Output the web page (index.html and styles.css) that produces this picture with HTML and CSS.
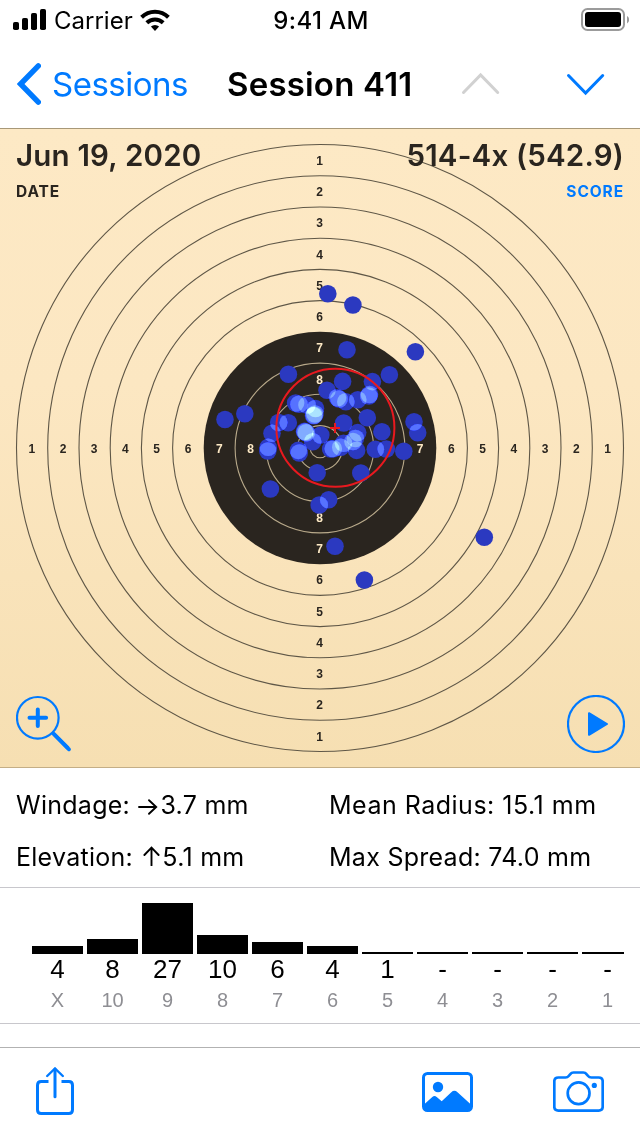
FILE: index.html
```html
<!DOCTYPE html>
<html lang="en">
<head>
    <title>Session 411</title>
    <meta name="viewport" content="width=device-width, initial-scale=1">
    <meta charset="UTF-8">
    <link rel="stylesheet" href="styles.css">
</head>
<body>
    <div class="statusbar">
        <div class="carrier">
            <svg width="34" height="22" viewBox="0 0 34 22">
                <rect x="0" y="13" width="6" height="8" rx="1.8"/>
                <rect x="9" y="9" width="6" height="12" rx="1.8"/>
                <rect x="18" y="4" width="6" height="17" rx="1.8"/>
                <rect x="27" y="0" width="6" height="21" rx="1.8"/>
            </svg>
            <span>Carrier</span>
            <svg class="wifi" width="30" height="22" viewBox="0 0 30 22">
                <g fill="none" stroke="#000" stroke-width="4">
                    <path d="M1.6 8.2a19.2 19.2 0 0 1 26.8 0"/>
                    <path d="M6.8 13.7a11.8 11.8 0 0 1 16.4 0"/>
                </g>
                <path d="M15 22l-4.1-4.4a6.2 6.2 0 0 1 8.2 0z"/>
            </svg>
        </div>
        <div class="clock">9:41 AM</div>
        <div class="battery">
            <svg width="48" height="24" viewBox="0 0 48 24">
                <rect x="1" y="1" width="42" height="21" rx="5.5" fill="none" stroke="#9b9b9b" stroke-width="2"/>
                <rect x="4" y="4" width="36" height="15" rx="3"/>
                <path d="M46 8q2.2 1.2 2.2 3.7t-2.2 3.7z" fill="#9b9b9b"/>
            </svg>
        </div>
    </div>

    <div class="navbar">
        <a class="back">
            <svg width="24" height="42" viewBox="0 0 24 42" fill="none" stroke="#007aff" stroke-width="5.4" stroke-linecap="round" stroke-linejoin="miter">
                <path d="M21.3 2.9L3.6 21l17.7 18.1"/>
            </svg>
            <span>Sessions</span>
        </a>
        <h1>Session 411</h1>
        <div class="arrows">
            <svg width="40" height="24" viewBox="0 0 40 24" fill="none" stroke="#d1d1d1" stroke-width="3" stroke-linecap="round">
                <path d="M2.5 20.5L19.6 3l17.1 17.5"/>
            </svg>
            <svg width="40" height="24" viewBox="0 0 40 24" fill="none" stroke="#007aff" stroke-width="3" stroke-linecap="round">
                <path d="M2.5 3.5L19.6 21 36.7 3.5"/>
            </svg>
        </div>
    </div>

    <div class="target">
        <svg class="face" width="640" height="640" viewBox="0 0 640 640">
            <g class="rings">
                <circle cx="320" cy="320" r="303.5"/>
                <circle cx="320" cy="320" r="272.3"/>
                <circle cx="320" cy="320" r="241"/>
                <circle cx="320" cy="320" r="209.8"/>
                <circle cx="320" cy="320" r="178.6"/>
                <circle cx="320" cy="320" r="147.4"/>
            </g>
            <circle class="black" cx="320" cy="320" r="116.3"/>
            <g class="rings inner">
                <circle cx="320" cy="320" r="84.9"/>
                <circle cx="320" cy="320" r="53.7"/>
                <circle cx="320" cy="320" r="22.4"/>
                <circle cx="320" cy="320" r="9.8"/>
            </g>
            <g class="numbers">
                <text x="319.7" y="36.8">1</text>
                <text x="319.7" y="68">2</text>
                <text x="319.7" y="99.2">3</text>
                <text x="319.7" y="130.5">4</text>
                <text x="319.7" y="161.7">5</text>
                <text x="319.7" y="192.9">6</text>
                <text class="light" x="319.7" y="224.1">7</text>
                <text class="light" x="319.7" y="256">8</text>
                <text class="light" x="319.7" y="394">8</text>
                <text class="light" x="319.7" y="425">7</text>
                <text x="319.7" y="456.2">6</text>
                <text x="319.7" y="487.7">5</text>
                <text x="319.7" y="518.9">4</text>
                <text x="319.7" y="550">3</text>
                <text x="319.7" y="581.4">2</text>
                <text x="319.7" y="612.6">1</text>

                <text x="31.8" y="325">1</text>
                <text x="63" y="325">2</text>
                <text x="94.2" y="325">3</text>
                <text x="125.4" y="325">4</text>
                <text x="156.6" y="325">5</text>
                <text x="188" y="325">6</text>
                <text class="light" x="219.3" y="325">7</text>
                <text class="light" x="250.6" y="325">8</text>
                <text class="light" x="389.2" y="325">8</text>
                <text class="light" x="420.2" y="325">7</text>
                <text x="451.4" y="325">6</text>
                <text x="482.6" y="325">5</text>
                <text x="513.8" y="325">4</text>
                <text x="545" y="325">3</text>
                <text x="576.4" y="325">2</text>
                <text x="607.6" y="325">1</text>
            </g>
            <!-- overlapping shots add up to a lighter blue -->
            <g class="shots">
                <circle cx="327.8" cy="165.7" r="8.8"/>
                <circle cx="352.9" cy="177" r="8.8"/>
                <circle cx="415.4" cy="223.8" r="8.8"/>
                <circle cx="347" cy="221.7" r="8.8"/>
                <circle cx="288.4" cy="246.2" r="8.8"/>
                <circle cx="389.4" cy="246.8" r="8.8"/>
                <circle cx="372.4" cy="253.6" r="8.8"/>
                <circle cx="342.6" cy="253.4" r="8.8"/>
                <circle cx="327" cy="262.3" r="8.8"/>
                <circle cx="225" cy="291.5" r="8.8"/>
                <circle cx="244.8" cy="285.7" r="8.8"/>
                <circle cx="295.6" cy="275" r="8.8"/>
                <circle cx="299" cy="276.3" r="8.8"/>
                <circle cx="307" cy="277" r="8.8"/>
                <circle cx="315.5" cy="280.5" r="8.8"/>
                <circle cx="315" cy="286" r="8.8"/>
                <circle cx="313.5" cy="287.8" r="8.8"/>
                <circle cx="314.3" cy="287.2" r="8.8"/>
                <circle cx="337.5" cy="269.8" r="8.8"/>
                <circle cx="339" cy="271" r="8.8"/>
                <circle cx="345.8" cy="273.7" r="8.8"/>
                <circle cx="357.8" cy="271.7" r="8.8"/>
                <circle cx="369.5" cy="266.5" r="8.8"/>
                <circle cx="368.8" cy="268" r="8.8"/>
                <circle cx="278.7" cy="294.5" r="8.8"/>
                <circle cx="288.3" cy="294.8" r="8.8"/>
                <circle cx="272" cy="305.3" r="8.8"/>
                <circle cx="304.5" cy="303.4" r="8.8"/>
                <circle cx="305.3" cy="304" r="8.8"/>
                <circle cx="306.3" cy="304.8" r="8.8"/>
                <circle cx="320.8" cy="307" r="8.8"/>
                <circle cx="312.7" cy="313.7" r="8.8"/>
                <circle cx="367.3" cy="289.7" r="8.8"/>
                <circle cx="343.7" cy="295" r="8.8"/>
                <circle cx="414" cy="293.8" r="8.8"/>
                <circle cx="417.7" cy="304.8" r="8.8"/>
                <circle cx="381.9" cy="303.8" r="8.8"/>
                <circle cx="357.7" cy="304.6" r="8.8"/>
                <circle cx="355.4" cy="310.5" r="8.8"/>
                <circle cx="353" cy="313.5" r="8.8"/>
                <circle cx="343.5" cy="315.3" r="8.8"/>
                <circle cx="340.8" cy="319.2" r="8.8"/>
                <circle cx="330.7" cy="321" r="8.8"/>
                <circle cx="333.3" cy="320.8" r="8.8"/>
                <circle cx="356.6" cy="322.4" r="8.8"/>
                <circle cx="375.3" cy="321.2" r="8.8"/>
                <circle cx="386.3" cy="321" r="8.8"/>
                <circle cx="403.8" cy="323.3" r="8.8"/>
                <circle cx="268.2" cy="319.3" r="8.8"/>
                <circle cx="267.8" cy="323" r="8.8"/>
                <circle cx="298.3" cy="322.4" r="8.8"/>
                <circle cx="299.3" cy="325" r="8.8"/>
                <circle cx="317.2" cy="344.8" r="8.8"/>
                <circle cx="360.8" cy="345" r="8.8"/>
                <circle cx="270.4" cy="361" r="8.8"/>
                <circle cx="319.2" cy="377" r="8.8"/>
                <circle cx="328.7" cy="371.8" r="8.8"/>
                <circle cx="335" cy="418.2" r="8.8"/>
                <circle cx="364.4" cy="452" r="8.8"/>
                <circle cx="484.3" cy="409.3" r="8.8"/>
            </g>
            <g class="group">
                <circle cx="335.4" cy="299.8" r="59"/>
                <path d="M330 300h10M335 295v10"/>
            </g>
        </svg>
        <div class="caption">
            <div>
                <p class="value">Jun 19, 2020</p>
                <p class="label">DATE</p>
            </div>
            <div class="score">
                <p class="value">514-4x (542.9)</p>
                <p class="label">SCORE</p>
            </div>
        </div>
        <div class="controls">
            <svg width="56" height="58" viewBox="0 0 56 58" fill="none" stroke="#007aff" stroke-linecap="round">
                <circle cx="21.8" cy="22.8" r="20.8" stroke-width="2.2"/>
                <path d="M13.5 22.8h16.6M21.8 14.5v16.6" stroke-width="4"/>
                <path d="M36.3 37.500L52 53.200" stroke-width="3.8" stroke-linecap="butt"/>
                <path d="M38 39.200L53 54.300" stroke-width="3.8"/>
            </svg>
            <svg width="58" height="58" viewBox="0 0 58 58">
                <circle cx="29" cy="29" r="28" fill="none" stroke="#007aff" stroke-width="2.2"/>
                <path d="M22 18.2L40 29 22 39.8z" fill="#007aff" stroke="#007aff" stroke-width="2" stroke-linejoin="round"/>
            </svg>
        </div>
    </div>

    <div class="stats">
        <p>Windage: <svg class="arrow" width="20" height="20" viewBox="0 0 20 20"><path d="M1 11h17M11 4.2l7.2 6.8-7.2 6.8"/></svg>3.7 mm</p>
        <p class="radius">Mean Radius: 15.1 mm</p>
        <p>Elevation: <svg class="arrow up" width="17" height="20" viewBox="0 0 17 20"><path d="M8.5 19.5V2M1.4 9l7.1-7.4L15.6 9"/></svg>5.1 mm</p>
        <p>Max Spread: 74.0 mm</p>
    </div>

    <div class="histogram">
        <div class="col"><div class="bar" style="height: 8px"></div><b>4</b><i>X</i></div>
        <div class="col"><div class="bar" style="height: 15px"></div><b>8</b><i>10</i></div>
        <div class="col"><div class="bar" style="height: 51px"></div><b>27</b><i>9</i></div>
        <div class="col"><div class="bar" style="height: 19px"></div><b>10</b><i>8</i></div>
        <div class="col"><div class="bar" style="height: 12px"></div><b>6</b><i>7</i></div>
        <div class="col"><div class="bar" style="height: 8px"></div><b>4</b><i>6</i></div>
        <div class="col"><div class="bar" style="height: 2px"></div><b>1</b><i>5</i></div>
        <div class="col"><div class="bar" style="height: 2px"></div><b>-</b><i>4</i></div>
        <div class="col"><div class="bar" style="height: 2px"></div><b>-</b><i>3</i></div>
        <div class="col"><div class="bar" style="height: 2px"></div><b>-</b><i>2</i></div>
        <div class="col last"><div class="bar" style="height: 2px"></div><b>-</b><i>1</i></div>
    </div>

    <div class="toolbar">
        <svg class="share" width="38" height="48" viewBox="0 0 38 48" fill="none" stroke="#007aff" stroke-width="3" stroke-linecap="round">
            <path d="M12.5 14.5H5.2q-3.700 0-3.700 3.700v24.600q0 3.700 3.700 3.700h27.600q3.700 0 3.700-3.700V18.200q0-3.700-3.700-3.700h-7.300" stroke-linecap="butt"/>
            <path d="M19 29.8V2.2"/>
            <path d="M11.2 9L19 1.5 26.8 9" stroke-width="2.4"/>
        </svg>
        <svg width="51" height="40" viewBox="0 0 51 40">
            <rect x="1.5" y="1.5" width="48" height="37" rx="4" fill="none" stroke="#007aff" stroke-width="3"/>
            <circle cx="16" cy="15" r="5.2" fill="#007aff"/>
            <path d="M2 32.5l8.3-7.4q2.2-2 4.4 0l5 4.2 9.6-9q3.1-2.9 6.2 0L49.5 33v2q0 4-4 4h-40Q2 39 2 35z" fill="#007aff"/>
        </svg>
        <svg class="camera" width="51" height="42" viewBox="0 0 51 42" fill="none" stroke="#007aff" stroke-width="2.7">
            <path d="M5.3 6.5h7.2q2 0 3.2-1.5l1.6-1.9q1.2-1.6 3.2-1.6h9.8q2 0 3.2 1.6l1.6 1.9q1.2 1.5 3.2 1.5h7.4q4 0 4 4v25.1q0 4-4 4H5.3q-4 0-4-4V10.5q0-4 4-4z"/>
            <circle cx="25.6" cy="22.3" r="10.9"/>
            <circle cx="41.3" cy="14.4" r="2.6" fill="#007aff" stroke="none"/>
        </svg>
    </div>
</body>
</html>
```
FILE: styles.css
```css
* {
    box-sizing: border-box;
}
body {
    margin: 0;
    width: 640px;
    height: 1136px;
    background-color: #fff;
    color: #000;
    font-family: Inter, "Liberation Sans", sans-serif;
    overflow: hidden;
}
p, h1 {
    margin: 0;
}
svg {
    display: block;
    flex: none;
}

/* status bar */
.statusbar {
    display: grid;
    grid-template-columns: 1fr auto 1fr;
    align-items: center;
    height: 40px;
    padding: 0 11px 0 13px;
    font-size: 24px;
    line-height: 40px;
}
.carrier {
    display: flex;
    align-items: center;
    gap: 7px;
}
.carrier span {
    padding-top: 2px;
    line-height: 38px;
}
.clock {
    padding-top: 2px;
    font-weight: 500;
    letter-spacing: 0.4px;
    line-height: 38px;
}
.battery {
    display: flex;
    justify-content: flex-end;
}

/* navigation */
.navbar {
    display: flex;
    align-items: center;
    height: 88px;
    padding: 0 34px 0 17px;
    line-height: 88px;
}
.back {
    display: flex;
    align-items: center;
    gap: 11px;
    width: 210px;
    color: #007aff;
    font-size: 33px;
    letter-spacing: -0.5px;
}
h1 {
    width: 234px;
    font-size: 33px;
    font-weight: 600;
    letter-spacing: 0.2px;
    white-space: nowrap;
}
.arrows {
    display: flex;
    gap: 65px;
}

/* target */
.target {
    position: relative;
    height: 640px;
    border-top: 1px solid #a89878;
    border-bottom: 1px solid #c4ae86;
    background: linear-gradient(#fde9c5, #fce7c2 40%, #f6dfb2);
}
.face {
    position: absolute;
    top: -1px;
    left: 0;
}
.rings {
    fill: none;
    stroke: #5f5747;
    stroke-width: 1.1;
}
.rings.inner {
    stroke: #b9aa8b;
}
.black {
    fill: #2a251f;
}
.numbers {
    fill: #2a251f;
    font-family: "Liberation Sans", Arial, sans-serif;
    font-size: 12px;
    font-weight: bold;
    text-anchor: middle;
}
.numbers .light {
    fill: #fde9c5;
}
.shots {
    isolation: isolate;
    fill: #2b39c0;
}
.shots circle {
    mix-blend-mode: plus-lighter;
}
.group {
    fill: none;
    stroke: #e8191f;
    stroke-width: 2;
}
.caption {
    position: absolute;
    top: 6px;
    left: 16px;
    right: 16px;
    display: flex;
    justify-content: space-between;
    color: #2a251f;
}
.value {
    font-size: 29.5px;
    font-weight: 600;
    line-height: 40px;
    letter-spacing: 0.2px;
}
.label {
    margin-top: 7px;
    font-size: 15.5px;
    font-weight: 700;
    line-height: 20px;
    letter-spacing: 0.9px;
}
.score {
    text-align: right;
}
.score .label {
    color: #007aff;
}
.controls {
    position: absolute;
    bottom: 14px;
    left: 16px;
    right: 15px;
    display: flex;
    justify-content: space-between;
}

/* statistics */
.stats {
    display: grid;
    grid-template-columns: 313px 1fr;
    grid-auto-rows: 52px;
    height: 120px;
    padding: 11px 16px;
    border-bottom: 1px solid #c8c7cc;
    font-size: 25px;
    letter-spacing: 0.27px;
    line-height: 52px;
    white-space: nowrap;
}
.radius {
    letter-spacing: 0.5px;
}
.arrow {
    display: inline-block;
    vertical-align: -2px;
    margin: 0 2px 0 1px;
    fill: none;
    stroke: #000;
    stroke-width: 1.9;
    stroke-linecap: round;
}
.arrow.up {
    vertical-align: 0;
    margin-left: 3px;
}

/* shots per ring */
.histogram {
    display: flex;
    gap: 4px;
    height: 136px;
    margin-bottom: 23px;
    padding: 0 16px 0 32px;
    border-bottom: 1px solid #c8c7cc;
    font-family: "Liberation Sans", Arial, sans-serif;
}
.col {
    display: flex;
    flex-direction: column;
    flex: none;
    justify-content: flex-end;
    width: 51px;
    height: 126px;
    text-align: center;
}
.last {
    width: 42px;
}
.last b, .last i {
    width: 51px;
}
.bar {
    background-color: #000;
}
.col b {
    font-size: 26px;
    font-weight: normal;
    line-height: 30px;
}
.col i {
    padding-top: 2px;
    color: #8e8e93;
    font-size: 20px;
    font-style: normal;
    line-height: 28px;
}

/* bottom toolbar */
.toolbar {
    display: flex;
    align-items: center;
    height: 89px;
    padding: 0 36px;
    border-top: 1px solid #b2b2b2;
}
.share {
    margin: -2px auto 0 0;
}
.camera {
    margin-left: 80px;
}
```
